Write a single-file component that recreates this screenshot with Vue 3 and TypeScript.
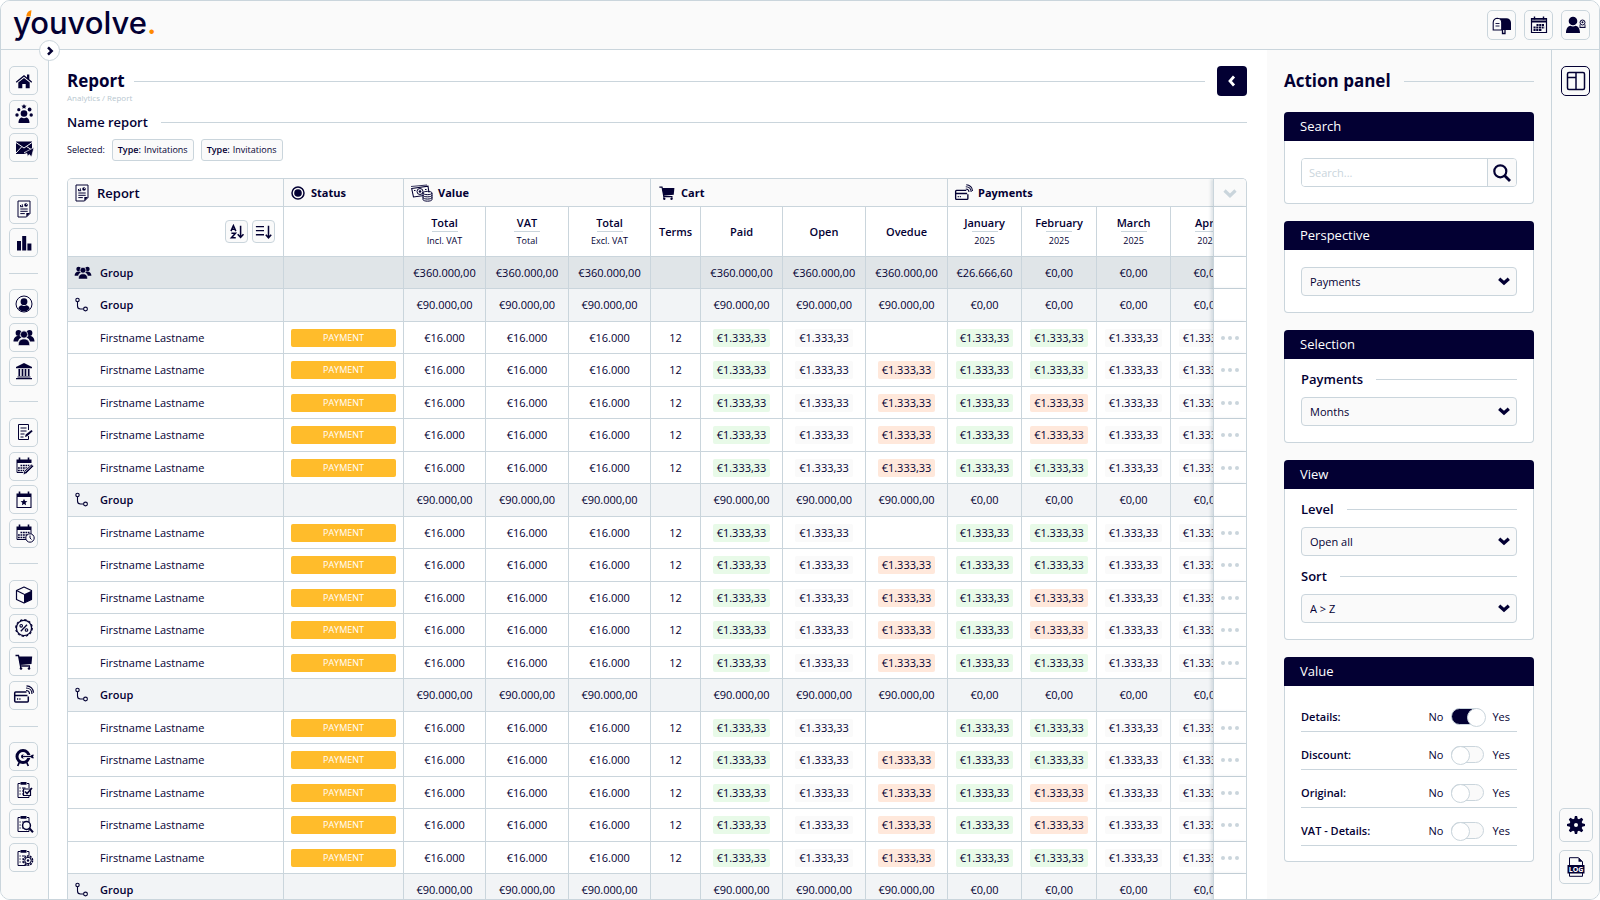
<script setup lang="ts">
import { reactive, ref } from 'vue'

type Tone = 'green' | 'grey' | 'orange' | ''
interface Cell { text: string; tone: Tone }
interface Row { kind: 'total' | 'group' | 'person'; label: string; cells: Cell[] }

const people =
  '<g fill="currentColor"><circle cx="4.500" cy="5" r="2.900"/><circle cx="15.500" cy="5" r="2.900"/><path d="M-.5 13.500c0-3.500 2-5.500 5-5.500 1.500 0 2.500.5 3 1.500-2 .8-3 2-3.500 4zM20.500 13.500c0-3.500-2-5.500-5-5.500-1.500 0-2.500.5-3 1.500 2 .8 3 2 3.500 4z"/></g><circle cx="10" cy="6.500" r="3.700" fill="currentColor" stroke="#fafafa" stroke-width=".8"/><path d="M4.300 17.500c0-4.500 2-6.500 5.700-6.500s5.700 2 5.700 6.500z" fill="currentColor" stroke="#fafafa" stroke-width=".6"/>'
const calendarTop = '<path d="M2.500 3.500h15v3.500h-15z" fill="currentColor"/><path d="M5.500 1.500v3M14.500 1.500v3" stroke="currentColor" stroke-width="1.600"/>'
const calendarDots = '<path d="M6.500 9.500h9M4 12h11.500M4 14.500h8" stroke="currentColor" stroke-width="1.700" stroke-dasharray="1.800 .7"/>'
const clipboard = '<path d="M6.500 3.500H4v14h11V15M13 3.500h2V8" fill="none" stroke="currentColor" stroke-width="1"/><path d="M6.500 2h6v2.700h-6z" fill="currentColor"/><path d="M5.500 8h1.200M5.500 11h1.200M5.500 14h1.200M8 8h3.500M8 11h1.500M8 14h1.500" stroke="currentColor" stroke-width="1.200"/>'
const report = '<path d="M4 2h12v12.500l-3.500 3.500H4z" fill="none" stroke="currentColor" stroke-width="1"/><path d="M16 14h-3.700v4z" fill="currentColor"/><path d="M6.500 7.500V6M8.300 7.500V5.300M6.200 7.700h3" stroke="currentColor" stroke-width="1"/><circle cx="12" cy="6" r="1.800" fill="currentColor"/><path d="M12 6l2-2" stroke="#fafafa" stroke-width=".7"/><path d="M6.300 10h7.400M6.300 12.300h7.400M6.300 14.600h4.500" stroke="currentColor" stroke-width="1"/>'
const cart = '<path d="M1.500 3.500h3l2 10.500h9.500" fill="none" stroke="currentColor" stroke-width="1.300"/><path d="M4.700 4.500h13.500l-.7 7.500-11.300 1z" fill="currentColor"/><path d="M6.500 14v2.500M15.500 14v2.500" stroke="currentColor" stroke-width="1"/><circle cx="7" cy="16.500" r="1.300" fill="currentColor"/><circle cx="15" cy="16.500" r="1.300" fill="currentColor"/>'
const card = '<path d="M12.500 7H1.700a1 1 0 0 0-1 1v8a1 1 0 0 0 1 1h11.600a1 1 0 0 0 1-1v-4.500M.7 10.500h12.800" fill="none" stroke="currentColor" stroke-width="1.500"/><path d="M3 14h1.200M5.300 14h1.200" stroke="currentColor" stroke-width="1.300"/><path d="M12 5.500c2 0 3.500 1.500 3.500 3.500M12 3c3.500 0 6 2.500 6 6M12.500.8c4 0 7 3.200 7 7" fill="none" stroke="currentColor" stroke-width="1.200"/>'

const icons: Record<string, string> = {
  home: '<path d="M1.800 10.800L10 4l3 2.400V3.500h2.300v4.800l2.900 2.500-.8 1L10 5.800l-7.400 6z" fill="currentColor"/><path d="M4.300 11.500L10 7l5.700 4.500v5.700h-4v-4.200H8.300v4.200h-4z" fill="currentColor"/>',
  crowd: '<g fill="currentColor"><circle cx="10" cy="9.500" r="3.300"/><path d="M4.500 19c0-4 2-5.500 3.300-5.500 1.200 1 3.200 1 4.400 0 1.300 0 3.300 1.500 3.300 5.500z"/><circle cx="4.800" cy="5.700" r="1.600"/><circle cx="15.600" cy="5.500" r="1.900"/><circle cx="3" cy="11" r="1.700"/><circle cx="17.200" cy="11" r="1.700"/><path d="M10 0l.8 1.600 1.800.2-1.300 1.300.3 1.700L10 4l-1.600.8.300-1.700-1.300-1.300 1.800-.2z"/></g>',
  mail: '<path d="M2 3.500h16v9l-3 1.500-3.500 2H2z" fill="currentColor"/><path d="M2 4.500l8 5.500 8-5.500M2 15l5.500-6M18 12l-5.500-3.500" fill="none" stroke="#fafafa" stroke-width="1"/><path d="M20 9.500l-2.500 9.500-2.200-2.500-1.800 2-.5-3-3-.8z" fill="currentColor" stroke="#fafafa" stroke-width=".7"/>',
  report,
  bars: '<path d="M3 8h4v9.500H3zM8.200 3h4v14.500h-4zM13.400 10.500h4v7h-4z" fill="currentColor"/>',
  user: '<circle cx="10" cy="10" r="8" fill="none" stroke="currentColor" stroke-width="1"/><circle cx="10" cy="7.700" r="3.400" fill="currentColor"/><path d="M4.300 14.500c.7-2.300 2.200-3.300 3.500-3.300 1.300.9 3.100.9 4.400 0 1.300 0 2.800 1 3.500 3.300-3 3.800-8.400 3.800-11.400 0z" fill="currentColor"/>',
  people,
  bank: '<path d="M10 2l8 4v1.300H2V6zM3.500 15.500h13v1h-13zM2 17h16v1.300H2z" fill="currentColor"/><path d="M5.300 8v7M8.500 8v7M11.500 8v7M14.700 8v7" stroke="currentColor" stroke-width="1.700"/>',
  note: '<path d="M14.500 8V2.500h-10V17.500h10V14" fill="none" stroke="currentColor" stroke-width="1"/><path d="M6.500 6h6M6.500 9h6M6.500 12h4M6.500 15h3" stroke="currentColor" stroke-width="1"/><path d="M11 15l.7-2.500L17.500 8l1.200 1.200-5.500 5z" fill="currentColor"/>',
  calEdit: calendarTop + '<path d="M3 7v9.500h7" fill="none" stroke="currentColor"/>' + calendarDots + '<path d="M9 19l1-4L17.500 8l2.300 2.300L12.500 17.500z" fill="currentColor" stroke="#fafafa" stroke-width=".8"/><path d="M11 16l6.500-6" stroke="#fafafa" stroke-width=".7"/>',
  calStar: calendarTop + '<path d="M3 7v10.500h14V7" fill="none" stroke="currentColor" stroke-width="1.100"/><path d="M10 8.700l1 2.200 2.400.3-1.800 1.600.5 2.400-2.100-1.200-2.100 1.200.5-2.400-1.800-1.600 2.400-.3z" fill="currentColor"/>',
  calClock: calendarTop + '<path d="M3 7v9.500h14V7" fill="none" stroke="currentColor"/>' + calendarDots + '<circle cx="16" cy="15" r="4.200" fill="#fafafa" stroke="currentColor" stroke-width="1"/><path d="M16 12.500V15l1.500 1.500" fill="none" stroke="currentColor" stroke-width="1"/>',
  cube: '<path d="M10 2l7.500 3.500v9L10 18l-7.500-3.500v-9z" fill="none" stroke="currentColor" stroke-width="1.200" stroke-linejoin="round"/><path d="M10 9.200l7.500-3.500v8.800L10 18z" fill="currentColor"/><path d="M2.500 5.500l7.500 3.700" stroke="currentColor" stroke-width="1.100"/>',
  percent: '<circle cx="10" cy="10" r="7.600" fill="none" stroke="currentColor" stroke-width="1.300"/><circle cx="10" cy="10" r="8.300" fill="none" stroke="currentColor" stroke-width="1.200" stroke-dasharray="2.350 2"/><path d="M6.800 13.200l6.200-6.500" stroke="currentColor" stroke-width="1.300"/><circle cx="7.200" cy="7.800" r="1.300" fill="none" stroke="currentColor" stroke-width="1.100"/><circle cx="12.500" cy="12" r="1.300" fill="none" stroke="currentColor" stroke-width="1.100"/>',
  cart,
  card,
  target: '<path d="M5.500 15l-1.800 4M12.500 15l1.800 4" stroke="currentColor" stroke-width="1.700"/><circle cx="9" cy="9.500" r="6" fill="none" stroke="currentColor" stroke-width="3"/><circle cx="9" cy="9.500" r="2" fill="currentColor"/><path d="M9 9.500h11" stroke="#fafafa" stroke-width="2.800"/><path d="M9 9.500h9" stroke="currentColor" stroke-width="1.200"/><path d="M16 9.500l2-1.700h2l-1 1.700 1 1.700h-2z" fill="currentColor"/>',
  clipCheck: clipboard + '<path d="M9.500 9h7v6.500h-7z" fill="#fafafa" stroke="currentColor" stroke-width="1.200"/><path d="M11 11.500l2 2 5-5.500" fill="none" stroke="currentColor" stroke-width="1.600"/>',
  clipSearch: clipboard + '<circle cx="12.500" cy="11.500" r="3.900" fill="#fafafa" stroke="currentColor" stroke-width="1.500"/><path d="M15.300 14.300l3.700 4" stroke="currentColor" stroke-width="2"/>',
  clipGear: clipboard + '<circle cx="14" cy="12.500" r="5.200" fill="#fafafa"/><circle cx="14" cy="12.500" r="4.500" fill="none" stroke="currentColor" stroke-width="1.600" stroke-dasharray="2 .8"/><circle cx="14" cy="12.500" r="3.200" fill="none" stroke="currentColor" stroke-width="1"/><circle cx="14" cy="12.500" r="1.200" fill="currentColor"/>',
  mailbox: '<path d="M5.500 3.200h9a4.500 4.500 0 0 1 4.500 4.500V15H9.500V8a4.500 4.500 0 0 0-4-4.800z" fill="currentColor"/><path d="M5.500 3.200A4.300 4.300 0 0 0 1.200 7.500V15h8.500V7.500a4.300 4.300 0 0 0-4.200-4.300z" fill="#fafafa" stroke="currentColor" stroke-width="1.100"/><path d="M3.500 8.500h4M3.500 11h4" stroke="currentColor" stroke-width=".9"/><path d="M10.500 15v3.500h2.500V15" fill="none" stroke="currentColor" stroke-width="1.300"/>',
  calendar: '<path d="M5.500 1.500v3M14.500 1.500v3" stroke="currentColor" stroke-width="1.400"/><path d="M2.500 3.500h15v14h-15z" fill="none" stroke="currentColor" stroke-width="1.200"/><path d="M2 3.500h16v1.300H2zM2 5.600h16v2H2z" fill="currentColor"/><path d="M7.500 10h8M4.500 12.500h11M4.500 15h8.500" stroke="currentColor" stroke-width="1.900" stroke-dasharray="2.100 .6"/>',
  admin: '<circle cx="7" cy="6" r="4.300" fill="currentColor"/><path d="M0 18c0-5.500 2.500-7 4.500-7.300 1.600 1 3.400 1 5 0 2 .3 4.500 1.800 4.500 7.300z" fill="currentColor"/><circle cx="16.500" cy="7.500" r="2.500" fill="none" stroke="currentColor" stroke-width="1"/><circle cx="16.500" cy="7.300" r="1" fill="currentColor"/><path d="M14 9.500v2.800h5V9.500M13.500 12.500h6" stroke="currentColor" stroke-width=".9" fill="none"/>',
  layout: '<rect x="1.500" y="1.500" width="17" height="17" rx="1.500" fill="none" stroke="currentColor" stroke-width="1.500"/><path d="M10 1.500v17M1.500 6.500H10" stroke="currentColor" stroke-width="1.500"/>',
  gear: '<path d="M8.900 1h2.200l.6 2.800 1.300.5 2.600-1.500 1.600 1.600-1.500 2.600.5 1.300 2.800.6v2.200l-2.800.6-.5 1.300 1.500 2.600-1.600 1.600-2.600-1.500-1.300.5-.6 2.800H8.900l-.6-2.800-1.300-.5-2.600 1.500-1.600-1.600 1.500-2.600-.5-1.300L1 11.100V8.900l2.800-.6.5-1.300-1.500-2.600 1.600-1.600 2.600 1.500 1.300-.5z" fill="currentColor"/><circle cx="10" cy="10" r="2" fill="#fafafa"/>',
  log: '<path d="M3.500 8V.7h9l4 4V8M3.500 16v3.300h13V16" fill="none" stroke="currentColor" stroke-width="1"/><path d="M12.500.7v4h4z" fill="currentColor"/><path d="M1.500 8h17v8.500h-17z" fill="currentColor"/><text x="10" y="14.700" font-size="7" font-weight="700" text-anchor="middle" fill="#fff">LOG</text>',
  radio: '<circle cx="10" cy="10" r="6" fill="none" stroke="currentColor" stroke-width="1.500"/><circle cx="10" cy="10" r="3.800" fill="currentColor"/>',
  money: '<path d="M.7 5.500L17 3.200l1.300 8.500L2.500 14z" fill="none" stroke="currentColor" stroke-width="1.100"/><path d="M0 3.500L16 2" stroke="currentColor" stroke-width=".8"/><circle cx="9" cy="8.500" r="3" fill="none" stroke="currentColor" stroke-width="1"/><circle cx="9" cy="8.500" r="1.300" fill="currentColor"/><path d="M3 7.500h1.500M14 6.500h1.500" stroke="currentColor"/><path d="M12 9.500h9v7.800h-9z" fill="#fafafa"/><path d="M12 10v6.500c0 2.200 9 2.200 9 0V10c0-2.200-9-2.200-9 0zM12 10c0 2.200 9 2.200 9 0M12 12.200c0 2.200 9 2.200 9 0M12 14.400c0 2.200 9 2.200 9 0" fill="none" stroke="currentColor" stroke-width="1"/>',
  branch: '<circle cx="3.500" cy="5" r="1.700" fill="none" stroke="currentColor" stroke-width="1.100"/><circle cx="11.500" cy="14" r="1.900" fill="none" stroke="currentColor" stroke-width="1.100"/><path d="M3.500 6.700V11c0 2.300 1 3 3 3h3.100" fill="none" stroke="currentColor" stroke-width="1.100"/>',
  az: '<path d="M3.300 9L6 3l2.700 6M4.300 7h3.500M3.800 11.500h4.500L3.800 16.500h4.800" fill="none" stroke="currentColor" stroke-width="1.700"/><path d="M14 3v12M10.800 12.500L14 16l3.200-3.500" fill="none" stroke="currentColor" stroke-width="1.700"/>',
  lines: '<path d="M1 4h9M1 8.500h9M1 13h9" stroke="currentColor" stroke-width="1.600"/><path d="M15 3v13M12 13l3 3.500 3-3.500" fill="none" stroke="currentColor" stroke-width="1.700"/>',
  search: '<circle cx="8.300" cy="8.300" r="6" fill="none" stroke="currentColor" stroke-width="2.200"/><path d="M12.500 12.500l5.500 5.500" stroke="currentColor" stroke-width="2.800"/>',
  down: '<path d="M5.200 7.700L10 12l4.800-4.300" fill="none" stroke="currentColor" stroke-width="3.200"/>',
  bigDown: '<path d="M4.500 7.500L10 12.700l5.500-5.200" fill="none" stroke="currentColor" stroke-width="3.200"/>',
  left: '<path d="M12 5.500L8 10l4 4.500" fill="none" stroke="currentColor" stroke-width="2.800"/>',
  right: '<path d="M8 6.300l3.700 3.700L8 13.700" fill="none" stroke="currentColor" stroke-width="2.500"/>'
}

const nav: { icon: string; label: string }[][] = [
  [{ icon: 'home', label: 'Home' }, { icon: 'crowd', label: 'Leads' }, { icon: 'mail', label: 'Mail' }],
  [{ icon: 'report', label: 'Report' }, { icon: 'bars', label: 'Analytics' }],
  [{ icon: 'user', label: 'Profile' }, { icon: 'people', label: 'Groups' }, { icon: 'bank', label: 'Institution' }],
  [{ icon: 'note', label: 'Notes' }, { icon: 'calEdit', label: 'Planning' }, { icon: 'calStar', label: 'Events' }, { icon: 'calClock', label: 'Schedule' }],
  [{ icon: 'cube', label: 'Products' }, { icon: 'percent', label: 'Discounts' }, { icon: 'cart', label: 'Cart' }, { icon: 'card', label: 'Payments' }],
  [{ icon: 'target', label: 'Goals' }, { icon: 'clipCheck', label: 'Tasks' }, { icon: 'clipSearch', label: 'Review' }, { icon: 'clipGear', label: 'Task settings' }]
]

const topActions = [
  { icon: 'mailbox', label: 'Mailbox' },
  { icon: 'calendar', label: 'Calendar' },
  { icon: 'admin', label: 'Account' }
]

const columns: { title: string; sub?: string }[] = [
  { title: 'Total', sub: 'Incl. VAT' },
  { title: 'VAT', sub: 'Total' },
  { title: 'Total', sub: 'Excl. VAT' },
  { title: 'Terms' },
  { title: 'Paid' },
  { title: 'Open' },
  { title: 'Ovedue' },
  { title: 'January', sub: '2025' },
  { title: 'February', sub: '2025' },
  { title: 'March', sub: '2025' },
  { title: 'April', sub: '2025' }
]

const plain = (values: string[]): Cell[] => values.map((text) => ({ text, tone: '' as Tone }))
const repeat = (value: string, n: number): string[] => Array<string>(n).fill(value)

function subGroup(): Row {
  return { kind: 'group', label: 'Group', cells: plain([...repeat('€90.000,00', 3), '', ...repeat('€90.000,00', 3), ...repeat('€0,00', 4)]) }
}

function person(overdue: boolean, february: Tone): Row {
  const amount = '€1.333,33'
  return {
    kind: 'person',
    label: 'Firstname Lastname',
    cells: [
      ...plain([...repeat('€16.000', 3), '12']),
      { text: amount, tone: 'green' },
      { text: amount, tone: 'grey' },
      overdue ? { text: amount, tone: 'orange' } : { text: '', tone: '' },
      { text: amount, tone: 'green' },
      { text: amount, tone: february },
      { text: amount, tone: 'grey' },
      { text: amount, tone: 'grey' }
    ]
  }
}

const block = (): Row[] => [
  subGroup(),
  person(false, 'green'),
  person(true, 'green'),
  person(true, 'orange'),
  person(true, 'orange'),
  person(true, 'green')
]

const rows: Row[] = [
  { kind: 'total', label: 'Group', cells: plain([...repeat('€360.000,00', 3), '', ...repeat('€360.000,00', 3), '€26.666,60', ...repeat('€0,00', 3)]) },
  ...block(),
  ...block(),
  ...block(),
  subGroup()
]

const query = ref('')
const perspective = ref('Payments')
const selection = ref('Months')
const level = ref('Open all')
const sort = ref('A > Z')
const toggles = reactive([
  { label: 'Details:', on: true },
  { label: 'Discount:', on: false },
  { label: 'Original:', on: false },
  { label: 'VAT - Details:', on: false }
])
</script>

<template>
  <div class="app">
    <header class="topbar">
      <a class="logo" href="#" aria-label="youvolve."
        >youvolve<span class="dot">.</span
        ><svg class="logo-tip" viewBox="0 0 6 7" aria-hidden="true"><path d="M.3 6.500C.8 3 2 .8 5.500.3L4.700 6.500z" fill="#ff8a00" /></svg
      ></a>
      <div class="top-actions">
        <button v-for="a in topActions" :key="a.icon" class="icon-btn" type="button" :aria-label="a.label">
          <svg class="icon" viewBox="0 0 20 20" v-html="icons[a.icon]"></svg>
        </button>
      </div>
      <button class="expand" type="button" aria-label="Expand menu">
        <svg class="icon" viewBox="0 0 20 20" v-html="icons.right"></svg>
      </button>
    </header>

    <div class="body">
      <nav class="sidebar" aria-label="Main">
        <template v-for="(group, g) in nav" :key="g">
          <hr v-if="g > 0" class="nav-line" />
          <button v-for="n in group" :key="n.icon" class="icon-btn" type="button" :aria-label="n.label">
            <svg class="icon" viewBox="0 0 20 20" v-html="icons[n.icon]"></svg>
          </button>
        </template>
      </nav>

      <main class="main">
        <div class="title-row">
          <h1>Report</h1>
          <span class="rule"></span>
          <button class="back" type="button" aria-label="Back">
            <svg class="icon" viewBox="0 0 20 20" v-html="icons.left"></svg>
          </button>
        </div>
        <p class="crumbs">Analytics / Report</p>
        <div class="name-row">
          <h2>Name report</h2>
          <span class="rule"></span>
        </div>
        <div class="selected">
          <span>Selected:</span>
          <button class="chip" type="button"><b>Type:</b> Invitations</button>
          <button class="chip" type="button"><b>Type:</b> Invitations</button>
        </div>

        <div class="table-wrap">
          <table>
            <colgroup>
              <col class="c-name" /><col class="c-status" />
              <col class="c-82" /><col class="c-83" /><col class="c-82" />
              <col class="c-50" /><col class="c-82" /><col class="c-83" /><col class="c-82" />
              <col class="c-74" /><col class="c-75" /><col class="c-74" /><col class="c-74" />
              <col class="c-menu" />
            </colgroup>
            <thead>
              <tr class="head">
                <th><span class="h-cell h-report"><svg class="icon" viewBox="0 0 20 20" v-html="icons.report"></svg>Report</span></th>
                <th><span class="h-cell"><svg class="icon wide" viewBox="0 0 20 20" v-html="icons.radio"></svg>Status</span></th>
                <th colspan="3"><span class="h-cell"><svg class="icon money" viewBox="0 0 22 20" v-html="icons.money"></svg>Value</span></th>
                <th colspan="4"><span class="h-cell"><svg class="icon small" viewBox="0 0 20 20" v-html="icons.cart"></svg>Cart</span></th>
                <th colspan="4"><span class="h-cell"><svg class="icon small" viewBox="0 0 20 20" v-html="icons.card"></svg>Payments</span></th>
                <th class="menu"><button class="bare" type="button" aria-label="Columns"><svg class="icon" viewBox="0 0 20 20" v-html="icons.bigDown"></svg></button></th>
              </tr>
              <tr class="sub">
                <th>
                  <span class="sorts">
                    <button class="sort-btn" type="button" aria-label="Sort A to Z"><svg class="icon" viewBox="0 0 20 20" v-html="icons.az"></svg></button>
                    <button class="sort-btn" type="button" aria-label="Sort order"><svg class="icon" viewBox="0 0 20 20" v-html="icons.lines"></svg></button>
                  </span>
                </th>
                <th></th>
                <th v-for="(c, i) in columns" :key="i">
                  <span v-if="c.sub" class="stack"><span>{{ c.title }}</span><i></i><small>{{ c.sub }}</small></span>
                  <template v-else>{{ c.title }}</template>
                </th>
                <th class="menu"></th>
              </tr>
            </thead>
            <tbody>
              <tr v-for="(r, i) in rows" :key="i" :class="r.kind">
                <td class="name">
                  <span class="name-cell">
                    <svg v-if="r.kind === 'total'" class="icon group-icon" viewBox="0 0 20 20" v-html="icons.people"></svg>
                    <svg v-else-if="r.kind === 'group'" class="icon" viewBox="0 0 20 20" v-html="icons.branch"></svg>
                    <span class="label">{{ r.label }}</span>
                  </span>
                </td>
                <td class="status"><span v-if="r.kind === 'person'" class="badge">PAYMENT</span></td>
                <td v-for="(c, j) in r.cells" :key="j"><span :class="c.tone ? ['pill', c.tone] : ''">{{ c.text }}</span></td>
                <td class="menu">
                  <button v-if="r.kind === 'person'" class="bare" type="button" aria-label="Row menu">
                    <svg class="dots" viewBox="0 0 18 4"><circle cx="2" cy="2" r="2" /><circle cx="9" cy="2" r="2" /><circle cx="16" cy="2" r="2" /></svg>
                  </button>
                </td>
              </tr>
            </tbody>
          </table>
        </div>
      </main>

      <aside class="panel">
        <div class="panel-title">
          <h2>Action panel</h2>
          <span class="rule"></span>
        </div>

        <section class="card">
          <h3>Search</h3>
          <div class="card-body">
            <form class="search" @submit.prevent>
              <input v-model="query" type="text" placeholder="Search..." aria-label="Search" />
              <button type="submit" aria-label="Search"><svg class="icon" viewBox="0 0 20 20" v-html="icons.search"></svg></button>
            </form>
          </div>
        </section>

        <section class="card">
          <h3>Perspective</h3>
          <div class="card-body">
            <div class="select">
              <select v-model="perspective" aria-label="Perspective"><option>Payments</option></select>
              <svg class="icon" viewBox="0 0 20 20" v-html="icons.down"></svg>
            </div>
          </div>
        </section>

        <section class="card">
          <h3>Selection</h3>
          <div class="card-body tight">
            <div class="field-title"><label for="sel-payments">Payments</label><span class="rule"></span></div>
            <div class="select">
              <select id="sel-payments" v-model="selection"><option>Months</option></select>
              <svg class="icon" viewBox="0 0 20 20" v-html="icons.down"></svg>
            </div>
          </div>
        </section>

        <section class="card">
          <h3>View</h3>
          <div class="card-body tight">
            <div class="field-title"><label for="sel-level">Level</label><span class="rule"></span></div>
            <div class="select">
              <select id="sel-level" v-model="level"><option>Open all</option></select>
              <svg class="icon" viewBox="0 0 20 20" v-html="icons.down"></svg>
            </div>
            <div class="field-title next"><label for="sel-sort">Sort</label><span class="rule"></span></div>
            <div class="select">
              <select id="sel-sort" v-model="sort"><option>A &gt; Z</option></select>
              <svg class="icon" viewBox="0 0 20 20" v-html="icons.down"></svg>
            </div>
          </div>
        </section>

        <section class="card">
          <h3>Value</h3>
          <div class="card-body toggles">
            <label v-for="t in toggles" :key="t.label" class="toggle-row">
              <b>{{ t.label }}</b>
              <span>No</span>
              <input v-model="t.on" type="checkbox" role="switch" />
              <span>Yes</span>
            </label>
          </div>
        </section>
      </aside>

      <div class="rail">
        <button class="icon-btn active" type="button" aria-label="Layout"><svg class="icon" viewBox="0 0 20 20" v-html="icons.layout"></svg></button>
        <div class="rail-bottom">
          <button class="icon-btn large" type="button" aria-label="Settings"><svg class="icon" viewBox="0 0 20 20" v-html="icons.gear"></svg></button>
          <button class="icon-btn large" type="button" aria-label="Log"><svg class="icon" viewBox="0 0 20 20" v-html="icons.log"></svg></button>
        </div>
      </div>
    </div>
  </div>
</template>

<style>
body {
  margin: 0;
  background: #fff;
}
</style>

<style scoped>
* {
  box-sizing: border-box;
}
.app {
  --ink: #030033;
  --line: #cad5dc;
  --soft: #fafafa;
  display: flex;
  flex-direction: column;
  height: 100vh;
  overflow: hidden;
  border: 1px solid var(--line);
  border-radius: 10px;
  background: #fff;
  color: var(--ink);
  font: 11px/16px "Open Sans", "Noto Sans", sans-serif;
}
h1, h2, h3, p {
  margin: 0;
}
button, input, select {
  margin: 0;
  color: inherit;
  font: inherit;
}
button {
  display: flex;
  align-items: center;
  justify-content: center;
  padding: 0;
  cursor: pointer;
}
.icon {
  display: block;
  flex: none;
  width: 20px;
  height: 20px;
  overflow: visible;
}
.rule {
  flex: 1;
  height: 1px;
  background: var(--line);
}
.topbar {
  position: relative;
  display: flex;
  flex: none;
  align-items: center;
  justify-content: space-between;
  height: 49px;
  padding: 0 9px 0 12px;
  border-bottom: 1px solid var(--line);
  background: var(--soft);
}
.logo {
  position: relative;
  padding-bottom: 4px;
  color: var(--ink);
  font: 500 31px/40px Inter, sans-serif;
  text-decoration: none;
}
.dot {
  color: #ff8a00;
}
.logo-tip {
  position: absolute;
  top: 7px;
  left: 13px;
  width: 6px;
  height: 7px;
}
.top-actions {
  display: flex;
  gap: 8px;
}
.icon-btn {
  flex: none;
  width: 29px;
  height: 30px;
  border: 1px solid var(--line);
  border-radius: 5px;
  background: var(--soft);
}
.icon-btn.active {
  border-color: var(--ink);
}
.icon-btn.large {
  width: 34px;
  height: 34px;
}
.expand {
  position: absolute;
  z-index: 3;
  bottom: -12px;
  left: 38px;
  width: 21px;
  height: 21px;
  border: 1px solid var(--line);
  border-radius: 50%;
  background: #fff;
}
.body {
  display: flex;
  flex: 1;
  min-height: 0;
}
.sidebar {
  display: flex;
  flex: none;
  flex-direction: column;
  align-items: flex-start;
  justify-content: space-between;
  width: 48px;
  padding: 16px 0 27px 8px;
  border-right: 1px solid var(--line);
  background: var(--soft);
}
.nav-line {
  width: 29px;
  height: 1px;
  margin: 11px 0;
  border: 0;
  background: var(--line);
}
.sidebar .icon-btn {
  height: 29px;
}
.main {
  display: flex;
  flex: 1;
  flex-direction: column;
  min-width: 0;
  padding: 16px 20px 0 18px;
}
.title-row {
  display: flex;
  align-items: center;
  gap: 9px;
  height: 30px;
}
h1 {
  font-size: 17px;
  font-weight: 700;
  line-height: 24px;
}
.back {
  width: 30px;
  height: 30px;
  margin-left: 3px;
  border: 0;
  border-radius: 4px;
  background: var(--ink);
  color: #fff;
}
.crumbs {
  height: 16px;
  color: #b8c7d0;
  font-size: 8px;
  line-height: 4px;
}
.name-row {
  display: flex;
  align-items: center;
  gap: 13px;
  height: 20px;
}
h2 {
  font-size: 13px;
  font-weight: 600;
  line-height: 20px;
}
.selected {
  display: flex;
  align-items: center;
  gap: 7px;
  height: 22px;
  margin: 7px 0 17px;
  font-size: 9px;
}
.chip {
  gap: 3px;
  height: 22px;
  padding: 0 5px;
  border: 1px solid var(--line);
  border-radius: 3px;
  background: var(--soft);
}
.chip b, .toggle-row b {
  font-weight: 600;
}
.table-wrap {
  flex: 1;
  min-height: 0;
  overflow: hidden;
  border: 1px solid var(--line);
  border-bottom: 0;
  border-radius: 5px 5px 0 0;
}
table {
  width: 1090px;
  min-width: 100%;
  border-spacing: 0;
  table-layout: fixed;
}
.c-name { width: 216px; }
.c-status { width: 120px; }
.c-82 { width: 82px; }
.c-83 { width: 83px; }
.c-50 { width: 50px; }
.c-74 { width: 74px; }
.c-75 { width: 75px; }
.c-menu { width: 33px; }
th, td {
  padding: 0;
  border-right: 1px solid var(--line);
  border-bottom: 1px solid var(--line);
  text-align: center;
  white-space: nowrap;
}
th {
  font-weight: 600;
}
.head th {
  height: 28px;
  background: var(--soft);
  font-weight: 700;
}
.h-cell {
  display: flex;
  align-items: center;
  gap: 5px;
  padding-left: 7px;
}
.h-report {
  padding-left: 4px;
  font-size: 13px;
  font-weight: 600;
}
.h-cell .wide {
  margin: 0 -2px 0 -3px;
}
.h-cell .money {
  width: 22px;
}
.h-cell .small {
  width: 18px;
  height: 18px;
}
.sub th {
  height: 50px;
}
.sorts {
  display: flex;
  justify-content: flex-end;
  gap: 4px;
  padding-right: 8px;
}
.sort-btn {
  width: 23px;
  height: 23px;
  border: 1px solid var(--line);
  border-radius: 4px;
  background: var(--soft);
}
.sort-btn .icon {
  width: 18px;
  height: 18px;
}
.stack {
  display: flex;
  flex-direction: column;
  align-items: center;
}
.stack i {
  width: 26px;
  height: 1px;
  margin-bottom: 1px;
  background: var(--line);
}
.stack small {
  font-size: 9px;
  font-weight: 400;
}
tbody td {
  height: 33px;
}
tbody tr:nth-child(odd) td {
  height: 32px;
}
.total td {
  background: #e0e5e8;
}
.group td {
  background: #f2f4f6;
}
.name-cell {
  display: grid;
  grid-template-columns: 26px 1fr;
  align-items: center;
  padding-left: 6px;
  text-align: left;
}
.name-cell .label {
  grid-column: 2;
}
.group-icon {
  width: 16px;
  height: 16px;
  margin-left: 1px;
}
.total .label, .group .label {
  font-weight: 600;
}
.status {
  padding: 0 7px;
}
.badge {
  display: block;
  height: 18px;
  border-radius: 2px;
  background: #ffbc2b;
  color: #fff;
  font-size: 9px;
  font-weight: 500;
  line-height: 18px;
}
.pill {
  display: inline-block;
  height: 18px;
  padding: 0 4px;
  border-radius: 2px;
  line-height: 18px;
}
.green { background: #e8fae8; }
.grey { background: #fafafa; }
.orange { background: #ffe8db; }
.menu {
  position: sticky;
  right: 0;
  border-right: 0;
  border-left: 1px solid var(--line);
  box-shadow: -2px 0 3px rgba(120, 145, 160, 0.25);
  color: #cad5dc;
}
tbody .menu, .sub .menu {
  background: #fff;
}
.bare {
  width: 100%;
  border: 0;
  background: none;
}
.dots {
  width: 18px;
  height: 4px;
  fill: currentColor;
}
.panel {
  flex: none;
  width: 284px;
  padding: 16px 17px 0;
  background: var(--soft);
}
.panel-title {
  display: flex;
  align-items: center;
  gap: 13px;
  height: 30px;
  margin-bottom: 16px;
}
.panel-title h2 {
  font-size: 17px;
  font-weight: 700;
  line-height: 24px;
}
.card {
  margin-bottom: 17px;
  border: 1px solid var(--line);
  border-top: 0;
  border-radius: 4px;
  background: #fff;
}
.card h3 {
  height: 29px;
  margin: 0 -1px;
  padding: 0 16px;
  border-radius: 4px 4px 0 0;
  background: var(--ink);
  color: #fff;
  font-size: 13px;
  font-weight: 500;
  line-height: 29px;
}
.card-body {
  padding: 17px 16px 16px;
}
.search {
  display: flex;
  height: 29px;
  border: 1px solid var(--line);
  border-radius: 4px;
  overflow: hidden;
}
.search input {
  flex: 1;
  min-width: 0;
  padding: 0 7px;
  border: 0;
  outline: 0;
  background: #fff;
}
.search input::placeholder {
  color: #cad5dc;
}
.search button {
  width: 29px;
  border: 0;
  border-left: 1px solid var(--line);
  background: var(--soft);
}
.select {
  position: relative;
  height: 29px;
}
.select select {
  width: 100%;
  height: 100%;
  padding: 0 8px;
  border: 1px solid var(--line);
  border-radius: 4px;
  appearance: none;
  background: var(--soft);
}
.select .icon {
  position: absolute;
  top: 4px;
  right: 3px;
  pointer-events: none;
}
.card-body.tight {
  padding-top: 10px;
}
.field-title {
  display: flex;
  align-items: center;
  gap: 13px;
  height: 20px;
  margin-bottom: 8px;
  font-size: 13px;
  font-weight: 600;
}
.field-title.next {
  margin-top: 10px;
}
.card-body.toggles {
  padding-top: 8px;
  padding-bottom: 15px;
}
.toggle-row {
  display: flex;
  align-items: flex-end;
  gap: 8px;
  height: 38px;
  padding: 0 7px 6px 0;
  border-bottom: 1px solid var(--line);
}
.toggle-row b {
  flex: 1;
}
.toggle-row input {
  appearance: none;
  width: 33px;
  height: 17px;
  border: 1px solid var(--line);
  border-radius: 9px;
  background: var(--soft);
}
.toggle-row input::before {
  content: "";
  display: block;
  width: 17px;
  height: 17px;
  margin: -1px;
  border: 1px solid var(--line);
  border-radius: 50%;
  background: #fff;
}
.toggle-row input:checked {
  background: var(--ink);
}
.toggle-row input:checked::before {
  margin-left: 15px;
}
.rail {
  display: flex;
  flex: none;
  flex-direction: column;
  align-items: center;
  justify-content: space-between;
  width: 48px;
  padding: 16px 0 15px;
  border-left: 1px solid var(--line);
  background: var(--soft);
}
.rail-bottom {
  display: flex;
  flex-direction: column;
  gap: 8px;
}
</style>
